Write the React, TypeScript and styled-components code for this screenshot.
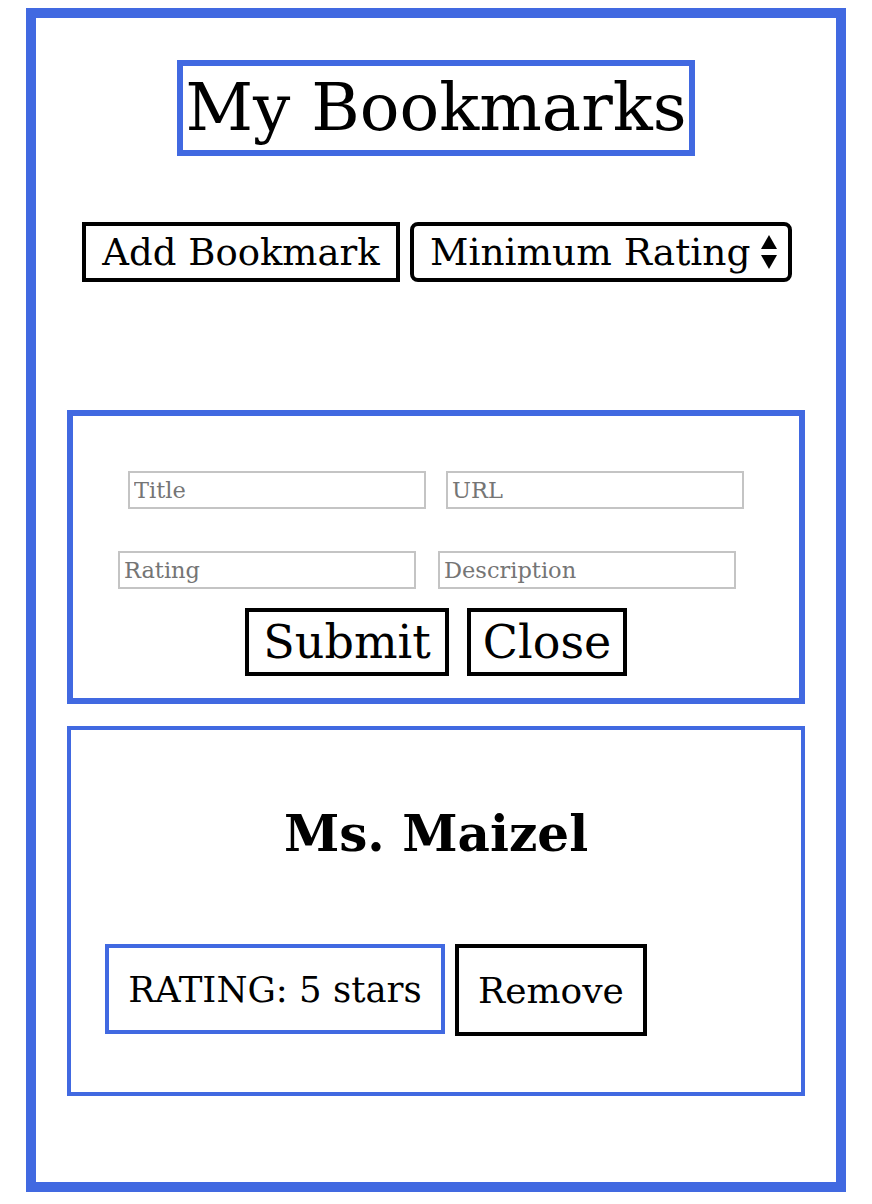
import React from "react";
import styled, { createGlobalStyle } from "styled-components";

const Global = createGlobalStyle`
  html, body { margin: 0; padding: 0; background: #fff; }
  body { padding-top: 8px; font-family: "DejaVu Serif", "Liberation Serif", serif; color: #000; }
  * { box-sizing: border-box; }
`;

const BLUE = "#4169e1";

const Page = styled.div`
  width: 820px;
  height: 1184px;
  margin: 0 auto;
  border: 10px solid ${BLUE};
  display: flex;
  flex-direction: column;
  align-items: center;
`;

const TitleBox = styled.h1`
  margin: 42px 0 0;
  width: 518px;
  height: 96px;
  border: 6px solid ${BLUE};
  display: flex;
  align-items: center;
  justify-content: center;
  font-size: 66px;
  font-weight: 400;
  line-height: 1;
  white-space: nowrap;
  overflow: hidden;
`;

const Toolbar = styled.div`
  margin-top: 66px;
  display: flex;
  gap: 10px;
  padding-left: 2px;
`;

const OutlineButton = styled.button<{ $w: number; $h: number; $size: number }>`
  width: ${(p) => p.$w}px;
  height: ${(p) => p.$h}px;
  border: 4px solid #000;
  border-radius: 0;
  background: #fff;
  font-family: inherit;
  font-size: ${(p) => p.$size}px;
  color: #000;
  padding: 0;
  display: flex;
  align-items: center;
  justify-content: center;
  white-space: nowrap;
`;

const SelectBox = styled.div`
  width: 382px;
  height: 60px;
  border: 4px solid #000;
  border-radius: 8px;
  display: flex;
  align-items: center;
  padding: 0 10px 0 16px;
`;

const Select = styled.select`
  appearance: none;
  -webkit-appearance: none;
  border: none;
  background: transparent;
  font-family: inherit;
  font-size: 37.5px;
  color: #000;
  flex: 1;
  min-width: 0;
  padding: 0;
  outline: none;
`;

const Panel = styled.div<{ $top: number; $h: number; $bw: number }>`
  margin-top: ${(p) => p.$top}px;
  width: 738px;
  height: ${(p) => p.$h}px;
  border: ${(p) => p.$bw}px solid ${BLUE};
  display: flex;
  flex-direction: column;
  align-items: center;
`;

const InputRow = styled.div<{ $top: number; $shift: number; $gap: number }>`
  margin-top: ${(p) => p.$top}px;
  display: flex;
  gap: ${(p) => p.$gap}px;
  transform: translateX(${(p) => p.$shift}px);
`;

const Input = styled.input`
  width: 298px;
  height: 38px;
  border: 2px solid #c4c4c4;
  padding: 0 4px;
  font-family: inherit;
  font-size: 22.5px;
  color: #000;
  &::placeholder { color: #757575; }
`;

const ButtonRow = styled.div`
  margin-top: 19px;
  display: flex;
  gap: 18px;
`;

const CardName = styled.h2`
  margin: 64px 0 0;
  height: 80px;
  font-size: 50px;
  font-weight: 700;
  line-height: 80px;
  white-space: nowrap;
`;

const CardActions = styled.div`
  margin-top: 70px;
  align-self: flex-start;
  margin-left: 34px;
  display: flex;
  gap: 10px;
  align-items: flex-start;
`;

const RatingTag = styled.div`
  width: 340px;
  height: 90px;
  border: 4px solid ${BLUE};
  display: flex;
  align-items: center;
  justify-content: center;
  font-size: 35.5px;
  white-space: nowrap;
`;

const Arrows = () => (
  <svg width="18" height="38" viewBox="0 0 18 38">
    <path d="M9 2 L17 16 L1 16 Z" fill="#000" />
    <path d="M1 22 L17 22 L9 36 Z" fill="#000" />
  </svg>
);

export default function App() {
  return (
    <>
      <Global />
      <Page>
        <TitleBox>My Bookmarks</TitleBox>
        <Toolbar>
          <OutlineButton $w={318} $h={60} $size={37}>Add Bookmark</OutlineButton>
          <SelectBox>
            <Select defaultValue="">
              <option value="">Minimum Rating</option>
              <option value="1">1</option>
              <option value="2">2</option>
              <option value="3">3</option>
              <option value="4">4</option>
              <option value="5">5</option>
            </Select>
            <Arrows />
          </SelectBox>
        </Toolbar>
        <Panel $top={128} $h={294} $bw={6}>
          <InputRow $top={55} $shift={0} $gap={20}>
            <Input placeholder="Title" />
            <Input placeholder="URL" />
          </InputRow>
          <InputRow $top={42} $shift={-9} $gap={22}>
            <Input placeholder="Rating" />
            <Input placeholder="Description" />
          </InputRow>
          <ButtonRow>
            <OutlineButton $w={204} $h={68} $size={46}>Submit</OutlineButton>
            <OutlineButton $w={160} $h={68} $size={46}>Close</OutlineButton>
          </ButtonRow>
        </Panel>
        <Panel $top={22} $h={370} $bw={4}>
          <CardName>Ms. Maizel</CardName>
          <CardActions>
            <RatingTag>RATING: 5 stars</RatingTag>
            <OutlineButton $w={192} $h={92} $size={36}>Remove</OutlineButton>
          </CardActions>
        </Panel>
      </Page>
    </>
  );
}
